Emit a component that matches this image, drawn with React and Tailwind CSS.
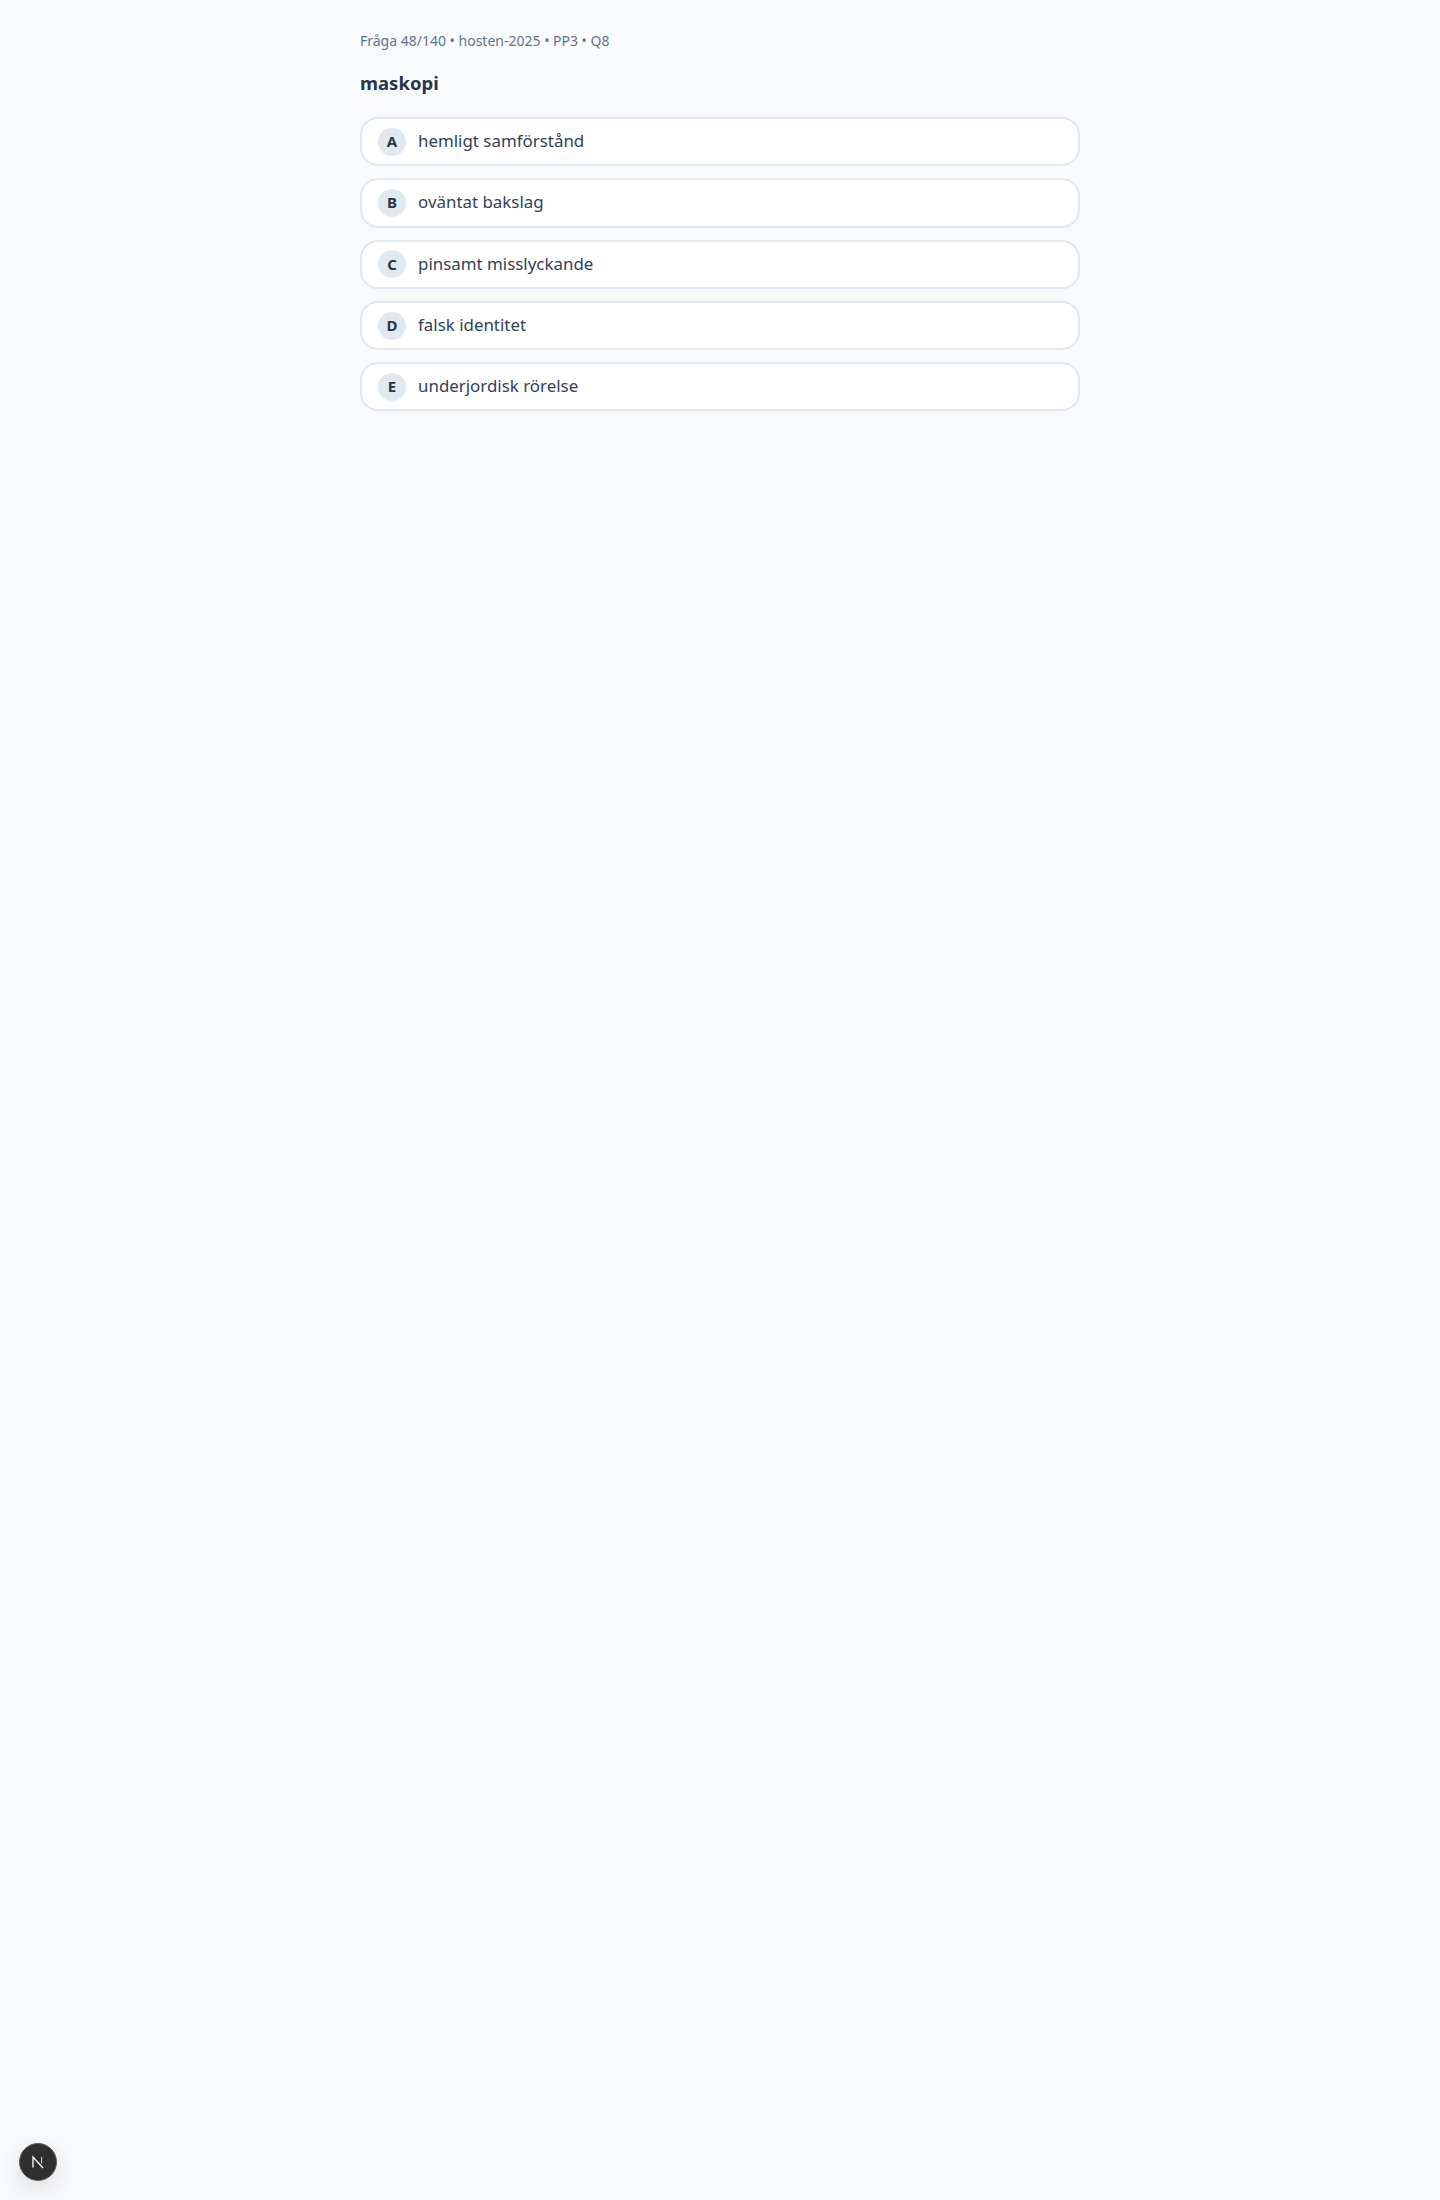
const options = [
  { key: 'A', text: 'hemligt samförstånd' },
  { key: 'B', text: 'oväntat bakslag' },
  { key: 'C', text: 'pinsamt misslyckande' },
  { key: 'D', text: 'falsk identitet' },
  { key: 'E', text: 'underjordisk rörelse' },
];

function DevIndicator() {
  return (
    <div className="fixed left-[19px] bottom-[19px] w-[38px] h-[38px] rounded-full bg-[#2f2f2f] border border-[#5a5a5a] shadow-[0_8px_24px_rgba(0,0,0,0.12)] flex items-center justify-center">
      <svg width="14" height="14" viewBox="0 0 14 14" fill="none">
        <path d="M2 12.5V2L12 13" stroke="#f5f5f5" strokeWidth="1.4" />
        <path d="M10.6 2V8.5" stroke="#cfcfcf" strokeWidth="1.1" />
      </svg>
    </div>
  );
}

export default function App() {
  return (
    <div className="min-h-screen bg-[#f8fafc] font-['Noto_Sans',sans-serif]">
      <div className="w-[720px] mx-auto pt-8">
        <p className="text-[14px] leading-[18px] text-[#64748b]">Fråga 48/140 • hosten-2025 • PP3 • Q8</p>
        <h1 className="mt-[19px] text-[18.5px] leading-[28px] font-bold text-[#27364a]">maskopi</h1>
        <div className="mt-[20px] flex flex-col gap-3">
          {options.map((opt) => (
            <button
              key={opt.key}
              className="w-full flex items-center gap-3 px-4 py-2 bg-white border-2 border-[#e2e8f0] rounded-[18px] text-left text-[16.9px] leading-[27.3px] text-[#334155]"
            >
              <span className="w-7 h-7 shrink-0 rounded-full bg-[#e2e8f0] flex items-center justify-center text-[15px] font-bold text-[#27364a]">
                {opt.key}
              </span>
              <span className="pb-[2px]">{opt.text}</span>
            </button>
          ))}
        </div>
      </div>
      <DevIndicator />
    </div>
  );
}
